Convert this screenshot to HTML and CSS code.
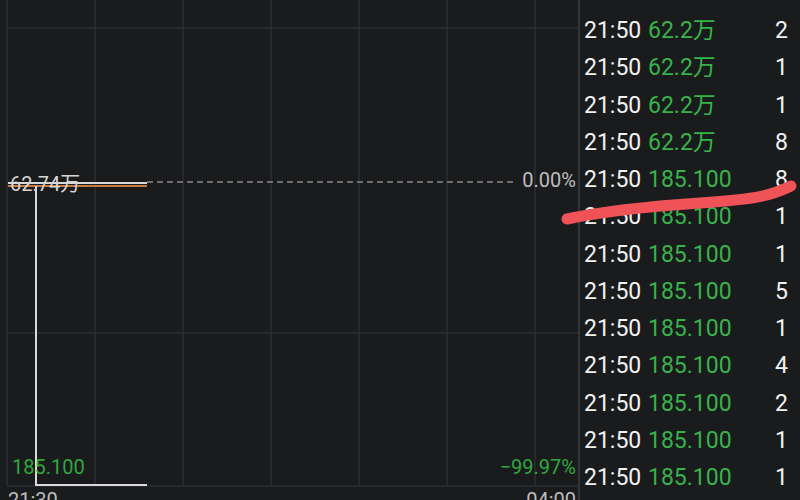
FILE: index.html
```html
<!DOCTYPE html>
<html lang="zh-CN">
<head>
  <meta charset="UTF-8" />
  <meta name="viewport" content="width=device-width, initial-scale=1.0"/>
  <title>分时成交</title>
  <link rel="stylesheet" href="styles.css">
</head>
<body>
  <div class="screen">
    <div class="chart">
      <svg class="chart-lines" width="578" height="500" viewBox="0 0 578 500">
        <g class="grid">
          <line x1="7" y1="28" x2="578" y2="28" />
          <line x1="7" y1="333" x2="578" y2="333" />
          <line x1="7" y1="486" x2="578" y2="486" />
          <line x1="7" y1="0" x2="7" y2="486" />
          <line x1="95" y1="0" x2="95" y2="486" />
          <line x1="183" y1="0" x2="183" y2="486" />
          <line x1="271" y1="0" x2="271" y2="486" />
          <line x1="359" y1="0" x2="359" y2="486" />
          <line x1="447" y1="0" x2="447" y2="486" />
          <line x1="535" y1="0" x2="535" y2="486" />
        </g>
        <line class="base" x1="147" y1="182" x2="517" y2="182" />
        <line class="avg" x1="8" y1="186" x2="147" y2="186" />
        <polyline class="price" points="8,183 147,183" />
        <polyline class="price" points="36,186 36,485 147,485" />
      </svg>
      <span class="label label-high">62.74万</span>
      <span class="label label-zero">0.00%</span>
      <span class="label label-low">185.100</span>
      <span class="label label-pct">−99.97%</span>
      <span class="label label-start">21:30</span>
      <span class="label label-end">04:00</span>
    </div>

    <div class="trades" id="trades"></div>

    <svg class="scribble" width="800" height="500" viewBox="0 0 800 500">
      <path d="M567 219 C 600 212, 640 207, 700 203 S 772 195, 791 186" />
    </svg>
  </div>

  <script>
    const tradesData = [
      { price: '62.2万', vol: 2 },
      { price: '62.2万', vol: 1 },
      { price: '62.2万', vol: 1 },
      { price: '62.2万', vol: 8 },
      { price: '185.100', vol: 8 },
      { price: '185.100', vol: 1 },
      { price: '185.100', vol: 1 },
      { price: '185.100', vol: 5 },
      { price: '185.100', vol: 1 },
      { price: '185.100', vol: 4 },
      { price: '185.100', vol: 2 },
      { price: '185.100', vol: 1 },
      { price: '185.100', vol: 1 }
    ];

    const trades = document.getElementById('trades');
    tradesData.forEach(item => {
      const row = document.createElement('div');
      row.classList.add('trade');
      row.innerHTML = `<span class="time">21:50</span><span class="price">${item.price}</span><span class="vol">${item.vol}</span>`;
      trades.appendChild(row);
    });
  </script>
</body>
</html>
```

FILE: styles.css
```css
body {
  margin: 0;
  padding: 0;
  background: #1a1b1d;
  font-family: Roboto, "Noto Sans CJK SC", sans-serif;
  overflow: hidden;
}

.screen {
  position: relative;
  display: flex;
  width: 800px;
  height: 500px;
}

.chart {
  position: relative;
  width: 578px;
  height: 500px;
  flex-shrink: 0;
}

.chart-lines {
  display: block;
}

.grid line {
  stroke: #2d2e31;
  stroke-width: 1.5;
}

.base {
  stroke: #8a8a8a;
  stroke-width: 1.5;
  stroke-dasharray: 6 4;
}

.avg {
  stroke: #c87a3c;
  stroke-width: 2;
}

.price {
  fill: none;
  stroke: #d9d9d9;
  stroke-width: 2;
}

.label {
  position: absolute;
  font-size: 20px;
  line-height: 20px;
  white-space: nowrap;
}

.label-high {
  left: 10px;
  top: 174px;
  color: #d6d6d6;
}

.label-zero {
  right: 2px;
  top: 170px;
  color: #bdbdbd;
}

.label-low {
  left: 12px;
  top: 457px;
  color: #2fa83e;
}

.label-pct {
  right: 2px;
  top: 457px;
  color: #2fa83e;
}

.label-start {
  left: 8px;
  top: 490px;
  color: #bdbdbd;
}

.label-end {
  right: 2px;
  top: 490px;
  color: #bdbdbd;
}

.trades {
  flex: 1;
  border-left: 2px solid #34353a;
  padding: 12px 12px 0 4px;
}

.trade {
  display: flex;
  height: 37.25px;
  line-height: 37.25px;
  font-size: 23px;
}

.time {
  color: #f2f2f2;
  width: 57px;
  margin-right: 7px;
}

.trade .price {
  color: #37b34a;
}

.vol {
  margin-left: auto;
  color: #f2f2f2;
}

.scribble {
  position: absolute;
  left: 0;
  top: 0;
  pointer-events: none;
}

.scribble path {
  fill: none;
  stroke: #ef5257;
  stroke-width: 11;
  stroke-linecap: round;
}
```
